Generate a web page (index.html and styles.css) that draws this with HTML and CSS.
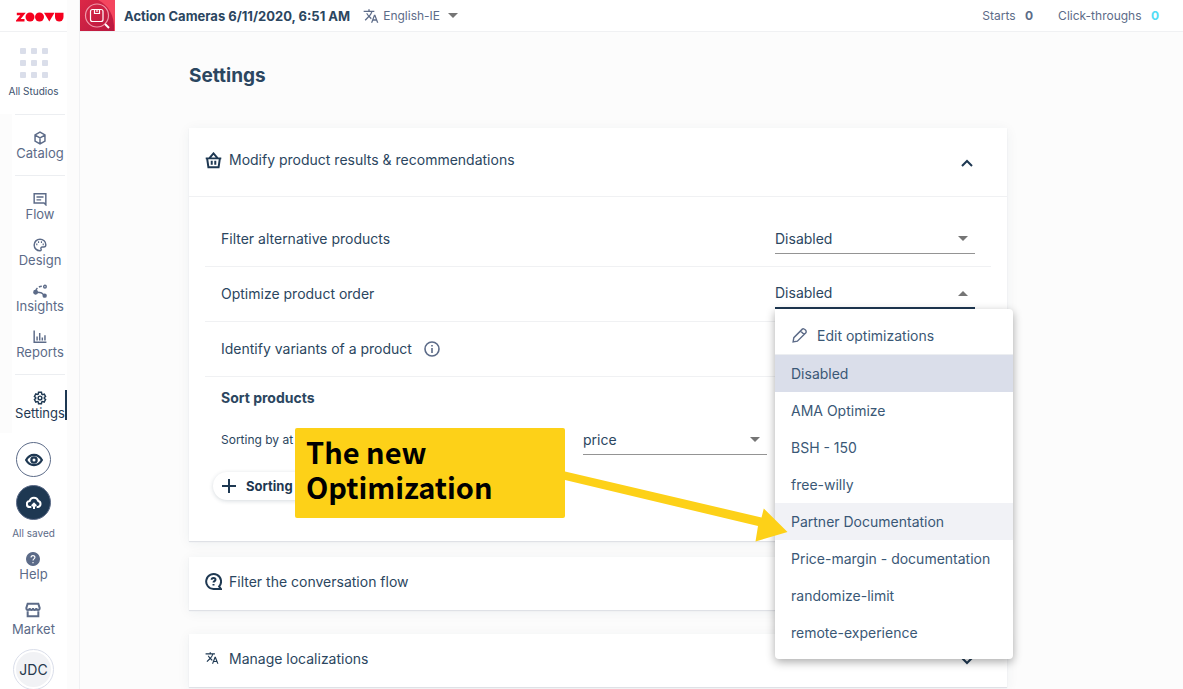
FILE: index.html
```html
<!DOCTYPE html>
<html lang="en">
<head>
<meta charset="utf-8">
<title>Settings</title>
<link rel="stylesheet" href="styles.css">
</head>
<body>
<svg class="defs" aria-hidden="true">
  <symbol id="translate" viewBox="0 0 24 24"><path fill="currentColor" d="M12.87 15.07l-2.54-2.51.03-.03c1.74-1.94 2.98-4.17 3.71-6.53H17V4h-7V2H8v2H1v1.99h11.17C11.5 7.92 10.44 9.75 9 11.35 8.07 10.32 7.3 9.19 6.69 8h-2c.73 1.63 1.73 3.17 2.98 4.56l-5.09 5.02L4 19l5-5 3.11 3.11.76-2.04zM18.5 10h-2L12 22h2l1.12-3h4.75L21 22h2l-4.5-12zm-2.62 7l1.62-4.33L19.12 17h-3.24z"/></symbol>
</svg>
<div class="app">
  <aside class="sidebar">
    <div class="rail">
      <a class="logo" href="#" aria-label="zoovu">
        <svg width="48" height="10" viewBox="0 0 48 10">
          <path class="bar" d="M.8 2H7L2 8.200H8.500"/>
          <circle cx="14" cy="5" r="4.500"/><circle cx="23.500" cy="5" r="4.500"/>
          <path d="M28 .7h10.500L33.300 9.500z"/>
          <path d="M39 .7h8.500V5a4.250 4.500 0 0 1-8.500 0z"/>
        </svg>
      </a>
      <a class="studios" href="#">
        <span class="dots"><i></i><i></i><i></i><i></i><i></i><i></i><i></i><i></i><i></i></span>
        <span>All Studios</span>
      </a>
      <nav class="nav">
        <div class="group">
          <a href="#"><svg viewBox="0 0 24 24"><path d="M12 2l8.500 4.800v10.400L12 22l-8.500-4.800V6.800zM3.500 7l8.500 5 8.500-5M12 12v10"/></svg>Catalog</a>
        </div>
        <div class="group">
          <a href="#"><svg viewBox="0 0 24 24"><path d="M2 3h20v19l-3-3H2zM6 8.500h12M6 13.500h8"/></svg>Flow</a>
          <a href="#"><svg viewBox="0 0 24 24"><path d="M12 2a10 10 0 1 0 0 20c2 0 2.500-1.600 1.800-3-1-2 .2-3.500 2.200-3.500h2.500c2 0 3.500-1.500 3.500-4C22 6 17.500 2 12 2z"/><path d="M5.500 11h2M8.500 7h2M13.500 7h2M16.500 11h2" stroke-width="3"/></svg>Design</a>
          <a href="#"><svg viewBox="0 0 24 24"><circle cx="20.500" cy="4.500" r="2.200"/><circle class="filled" cx="4.500" cy="14" r="3"/><circle class="filled" cx="20" cy="20" r="2.500"/><path d="M5 11C6 7 10 4 16 4" stroke-dasharray="5 3"/><path d="M7 14c6 0 10 2 11 5"/></svg>Insights</a>
          <a href="#"><svg viewBox="0 0 24 24"><path d="M2 1v20h21M7 11v7M11.500 5v13M16 13v5M20.500 9v9"/></svg>Reports</a>
        </div>
        <div class="group">
          <a href="#" class="current" aria-current="page"><svg viewBox="0 0 24 24"><path d="M19.430 12.980c.04-.32.07-.64.07-.98 0-.34-.03-.66-.07-.98l2.110-1.650-2.120-4.100-2.660 1.030c-.52-.4-1.080-.73-1.690-.98L14.490 2h-5l-.36 3.070c-.61.25-1.170.59-1.690.98l-2.660-1L2.460 9.370l2.110 1.650c-.04.32-.07.65-.07.98 0 .33.03.66.07.98l-2.110 1.650 2.320 4.350 2.660-1.030c.52.4 1.080.73 1.690.98L9.510 22h4.980l.38-3.070c.61-.25 1.170-.59 1.690-.98l2.660 1.030 2.320-4.350z"/><circle cx="12" cy="12" r="3.200"/></svg>Settings</a>
        </div>
      </nav>
      <div class="tools">
        <button class="round" aria-label="Preview"><svg viewBox="0 0 24 24"><path d="M1.500 12C4 7.500 7.700 5.200 12 5.200S20 7.500 22.500 12C20 16.500 16.300 18.800 12 18.800S4 16.500 1.500 12z"/><circle cx="12" cy="12" r="3.500"/></svg></button>
        <button class="round solid" aria-label="Publish"><svg viewBox="0 0 24 24"><path d="M8 18H6a4.500 4.500 0 0 1-.5-9A6.700 6.700 0 0 1 18.300 9 4.600 4.600 0 0 1 18 18h-2M12 21v-7M8.700 16.500 12 13l3.300 3.500"/></svg></button>
        <span class="saved">All saved</span>
        <a class="tool" href="#"><svg viewBox="0 0 24 24"><circle class="filled" cx="12" cy="12" r="11"/><path stroke="#fff" d="M8.700 9.500c0-4.500 6.600-4.300 6.600-.3 0 2.500-3.300 2.600-3.300 5.300M12 17v2.200"/></svg>Help</a>
        <a class="tool market" href="#"><svg viewBox="0 0 24 24"><path d="M4 2.500h16L22 9c0 4-5 4-5 0 0 4-5 4-5 0 0 4-5 4-5 0 0 4-5 4-5 0zM4 14v7.500h16V14"/></svg>Market</a>
        <button class="avatar" aria-label="Account"><span>JDC</span></button>
      </div>
    </div>
  </aside>
  <div class="page">
    <header class="topbar">
      <svg class="thumb" width="35" height="31" viewBox="0 0 35 31">
        <defs><linearGradient id="red" x1="0" y1="0" x2="1" y2="1"><stop offset="0" stop-color="#dc2847"/><stop offset="1" stop-color="#b8183f"/></linearGradient></defs>
        <path fill="#f4465f" d="M0 0h35v31H0z"/><path fill="url(#red)" d="M0 0h18c10 5 17 15 16 31H0z"/>
        <g fill="none" stroke="#fff" stroke-width="1.200"><circle cx="17" cy="15.500" r="11.500" stroke="#f09bac"/><rect x="10.500" y="9.500" width="12.500" height="12" rx="2"/><path d="M14.500 9.500v4h5v-4M17 9.500v2.500"/><path d="M25 24l4 4" stroke-width="2"/></g>
      </svg>
      <strong>Action Cameras 6/11/2020, 6:51 AM</strong>
      <button class="language"><svg width="16" height="16"><use href="#translate"/></svg><span>English-IE</span><i class="caret"></i></button>
      <div class="stats"><span>Starts <b>0</b></span><span>Click-throughs <b class="cyan">0</b></span></div>
    </header>
    <main class="content">
      <h1>Settings</h1>
      <section class="card open">
        <button class="card-head" aria-expanded="true">
          <svg class="head-icon" viewBox="0 0 24 24"><path d="M1 9h22M3 9l1.800 12.500h14.400L21 9M6 9 12 2 18 9M9.500 12.500V18M14.500 12.500V18"/></svg>
          <span>Modify product results &amp; recommendations</span>
          <svg class="chevron" viewBox="0 0 12 8"><path d="M1 7l5-5 5 5"/></svg>
        </button>
        <div class="rows">
          <div class="row">
            <label for="alt">Filter alternative products</label>
            <div class="picker"><select id="alt"><option>Disabled</option></select><i class="caret"></i></div>
          </div>
          <div class="row">
            <label for="order">Optimize product order</label>
            <div class="picker active">
              <select id="order"><option>Disabled</option></select><i class="caret up"></i>
              <ul class="menu" role="listbox" aria-label="Optimize product order">
                <li class="edit"><svg viewBox="0 0 24 24"><path d="M3 21l1-6L16 3c2-2 7 3 5 5L9 20zM13.500 5.500l5 5"/></svg>Edit optimizations</li>
                <li class="chosen" role="option" aria-selected="true">Disabled</li>
                <li role="option">AMA Optimize</li>
                <li role="option">BSH - 150</li>
                <li role="option">free-willy</li>
                <li class="hover" role="option">Partner Documentation</li>
                <li role="option">Price-margin - documentation</li>
                <li role="option">randomize-limit</li>
                <li role="option">remote-experience</li>
              </ul>
            </div>
          </div>
          <div class="row">
            <span>Identify variants of a product</span>
            <svg class="info" viewBox="0 0 16 16"><circle cx="8" cy="8" r="7"/><path d="M8 7v5M8 4v1.500"/></svg>
          </div>
          <div class="sort">
            <h2>Sort products</h2>
            <div class="sort-row">
              <label for="attr">Sorting by at</label>
              <div class="picker narrow"><select id="attr"><option>price</option></select><i class="caret"></i></div>
            </div>
            <button class="add"><svg viewBox="0 0 14 14"><path d="M7 0v14M0 7h14"/></svg>Sorting</button>
          </div>
        </div>
      </section>
      <section class="card">
        <button class="card-head">
          <svg class="head-icon" viewBox="0 0 24 24"><path d="M20 19a10.500 10.500 0 1 0-8 3.500h10.500zM9.300 9.700c0-3.800 5.500-3.500 5.500-.3 0 2-2.800 2.200-2.800 4.100M12 15.500v2"/></svg>
          <span>Filter the conversation flow</span>
          <svg class="chevron" viewBox="0 0 12 8"><path d="M1 1l5 5 5-5"/></svg>
        </button>
      </section>
      <section class="card spaced">
        <button class="card-head">
          <span class="head-icon"><svg class="glyph" width="14" height="14"><use href="#translate"/></svg></span>
          <span>Manage localizations</span>
          <svg class="chevron" viewBox="0 0 12 8"><path d="M1 1l5 5 5-5"/></svg>
        </button>
      </section>
    </main>
  </div>
  <div class="callout">
    <p>The new Optimization</p>
    <svg width="224" height="90" viewBox="0 0 224 90"><path d="M0 43.500L196.500 89.500 198.800 80.500 222.500 104 190.500 113.500 193 98 0 52z"/></svg>
  </div>
</div>
</body>
</html>
```

FILE: styles.css
```css
* { box-sizing: border-box; }
body {
  margin: 0;
  background: #fcfcfc;
  color: #2b4660;
  font: 14px/20px Inter, "Liberation Sans", sans-serif;
}
button, select { font: inherit; color: inherit; background: none; border: 0; padding: 0; margin: 0; }
a { color: inherit; text-decoration: none; }
h1, h2, p, ul { margin: 0; padding: 0; }
svg { flex: none; fill: none; stroke: currentColor; stroke-width: 2; }
.filled { fill: currentColor; }
.defs { position: absolute; width: 0; height: 0; }
.thumb, .callout svg, .language svg, .glyph { stroke: none; }
.app { position: relative; display: flex; height: 100vh; overflow: hidden; }

/* sidebar */
.sidebar { flex: none; width: 80px; border-right: 1px solid #f0f1f3; color: #5c6b88; font-size: 13px; line-height: 14px; }
.rail { width: 67px; background: #fff; }
.logo { display: flex; align-items: center; justify-content: flex-end; height: 32px; padding: 3px 3px 0 0; border-bottom: 1px solid #f0f1f3; }
.logo svg { fill: #f5001e; stroke: none; }
.logo .bar { fill: none; stroke: #f5001e; stroke-width: 2.6; }
.studios { display: flex; flex-direction: column; align-items: center; gap: 6px; height: 82px; padding-top: 16px; color: #3d526e; font-size: 10px; }
.dots { display: grid; grid-template-columns: repeat(3, 6px); gap: 6px 5px; }
.dots i { height: 6px; border-radius: 1px; background: #dadeea; }
.nav { border-left: 12px solid #fcfcfc; padding-bottom: 13px; }
.group { display: flex; flex-direction: column; gap: 17px; margin: 0 2px 0 3px; padding: 16px 0 15px; border-top: 1px solid #eceef1; }
.group:last-child { padding-bottom: 0; }
.group a { display: flex; flex-direction: column; align-items: center; gap: 1px; }
.group svg { width: 14px; height: 14px; stroke-width: 2.5; }
.group .current { position: relative; color: #1e3852; }
.current::after { content: ""; position: absolute; right: -2px; top: -1px; width: 2px; height: 30px; background: #1e3852; }
.tools { display: flex; flex-direction: column; align-items: center; padding-top: 9px; }
.round { display: grid; place-items: center; width: 35px; height: 35px; margin-bottom: 8px; border: 1px solid #5c6b88; border-radius: 50%; color: #1e3852; }
.round svg { width: 18px; height: 18px; stroke-width: 3; }
.solid { margin-bottom: 6px; background: #1e3852; color: #fff; }
.solid svg { width: 16px; height: 16px; }
.saved { font-size: 10px; }
.tool { display: flex; flex-direction: column; align-items: center; gap: 1px; margin-top: 12px; }
.tool svg { width: 14px; height: 14px; }
.market { gap: 4px; margin-top: 21px; }
.market svg { width: 16px; height: 16px; stroke-width: 3; }
.avatar { flex: none; width: 41px; height: 41px; margin-top: 13px; padding: 2px; border: 1px solid #dadeea; border-radius: 50%; color: #26384c; font-size: 14px; }
.avatar span { display: grid; place-items: center; height: 100%; border-radius: 50%; background: #f1f2f5; }

/* top bar */
.page { flex: 1; min-width: 0; }
.topbar { display: flex; align-items: center; height: 32px; border-bottom: 1px solid #f0f1f3; background: #fff; font-size: 12px; color: #5c6b88; }
.topbar strong { margin: 0 13px 0 9px; font-size: 13px; font-weight: 700; color: #2b4660; }
.language { display: flex; align-items: center; gap: 4px; }
.language .caret { margin-left: 4px; }
.stats { display: flex; gap: 25px; margin-left: auto; padding-right: 24px; }
.stats b { margin-left: 6px; font-weight: 700; }
.stats .cyan { color: #53dcf5; }
.caret { width: 0; height: 0; border: 5px solid transparent; border-top-color: #757575; border-bottom: 0; }
.caret.up { border-bottom: 5px solid #757575; border-top: 0; }

/* settings cards */
.content { padding: 32px 176px 0 109px; }
h1 { font-size: 19px; line-height: 24px; margin-bottom: 40px; }
h2 { font-size: 14px; line-height: 20px; }
.card { background: #fff; box-shadow: 0 1px 1px #dfe1e6, 0 2px 12px #1e385210; }
.card + .card { margin-top: 16px; }
.card + .spaced { margin-top: 24px; }
.card-head { display: flex; align-items: center; gap: 7px; width: 100%; height: 53px; padding: 0 34px 4px 16px; text-align: left; }
.open .card-head { height: 69px; border-bottom: 1px solid #f0f1f3; }
.head-icon { width: 17px; height: 17px; color: #1e3852; stroke-width: 2.8; }
.chevron { width: 12px; height: 8px; margin: 5px 0 0 auto; color: #1e3852; }
.rows { padding: 15px 16px 0; }
.row { display: flex; align-items: center; gap: 12px; height: 55px; padding: 0 16px; border-bottom: 1px solid #f0f1f3; }
.info { width: 16px; height: 16px; stroke-width: 1.6; color: #5c6b88; }
.picker { position: relative; display: flex; align-items: center; width: 200px; height: 30px; margin-left: auto; border-bottom: 1px solid #949494; }
.picker.active { border-bottom: 2px solid #1e3852; }
.picker select { flex: 1; appearance: none; height: 28px; outline: 0; }
.picker .caret { margin-right: 7px; }
.narrow { width: 184px; margin: 0; }
.sort { padding: 11px 16px 41px; }
.sort-row { display: grid; grid-template-columns: 362px 184px; align-items: center; margin-top: 17px; font-size: 12px; }
.sort-row select { font-size: 14px; }
.add { display: flex; align-items: center; gap: 10px; height: 28px; width: 140px; margin: 17px 0 0 -8px; padding: 0 9px; border-radius: 14px; box-shadow: 0 1px 4px #1e385230; font-size: 13px; font-weight: 700; color: #1e3852; }
.add svg { width: 14px; height: 14px; }

/* option list over the page */
.menu { position: absolute; z-index: 2; top: calc(100% + 2px); left: 0; width: 238px; padding: 8px 0; border-radius: 0 4px 4px 4px; background: #fff; box-shadow: 0 3px 10px #0005; list-style: none; color: #3a5876; }
.menu li { height: 37px; padding: 0 16px; line-height: 37px; white-space: nowrap; }
.menu .edit { display: flex; align-items: center; gap: 9px; height: 38px; border-bottom: 1px solid #eceef1; }
.edit svg { width: 17px; height: 17px; color: #5c6b88; }
.menu .chosen { background: #dadeea; }
.menu .hover { background: #f1f2f6; }

/* annotation over the page */
.callout { position: absolute; z-index: 3; left: 295px; top: 428px; display: flex; }
.callout p { width: 270px; height: 90px; padding: 6px 70px 0 11px; border-radius: 2px; background: #fdd118; color: #000; font: bold 29px/35px "Noto Sans CJK SC", sans-serif; }
.callout svg { overflow: visible; fill: #fdd118; }
```
